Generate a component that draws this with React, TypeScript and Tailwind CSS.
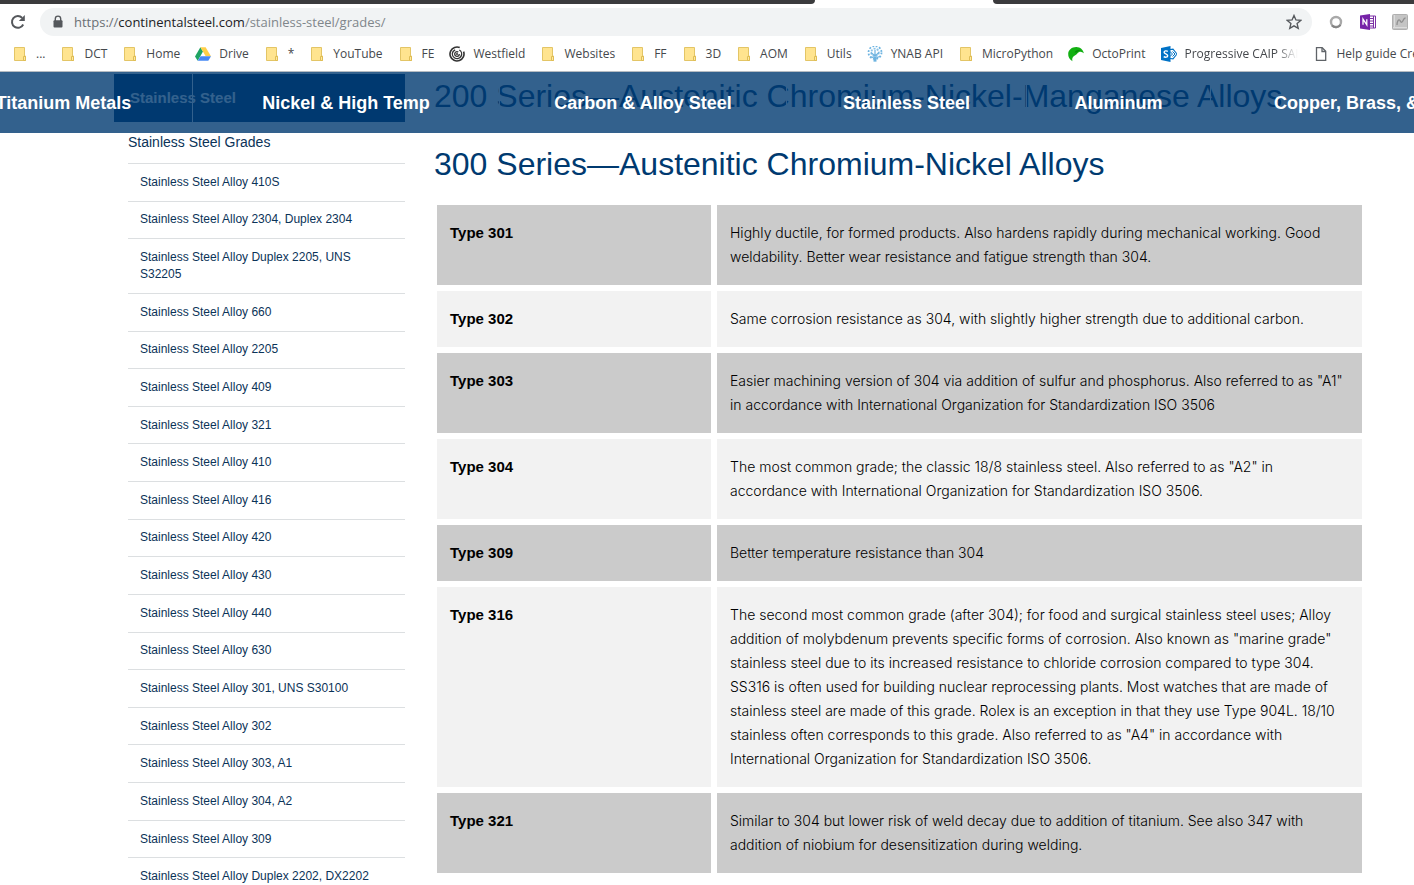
import React from 'react';

const grades = [
  'Stainless Steel Alloy 410S',
  'Stainless Steel Alloy 2304, Duplex 2304',
  'Stainless Steel Alloy Duplex 2205, UNS S32205',
  'Stainless Steel Alloy 660',
  'Stainless Steel Alloy 2205',
  'Stainless Steel Alloy 409',
  'Stainless Steel Alloy 321',
  'Stainless Steel Alloy 410',
  'Stainless Steel Alloy 416',
  'Stainless Steel Alloy 420',
  'Stainless Steel Alloy 430',
  'Stainless Steel Alloy 440',
  'Stainless Steel Alloy 630',
  'Stainless Steel Alloy 301, UNS S30100',
  'Stainless Steel Alloy 302',
  'Stainless Steel Alloy 303, A1',
  'Stainless Steel Alloy 304, A2',
  'Stainless Steel Alloy 309',
  'Stainless Steel Alloy Duplex 2202, DX2202',
];

const types = [
  {
    name: 'Type 301',
    text: 'Highly ductile, for formed products. Also hardens rapidly during mechanical working. Good weldability. Better wear resistance and fatigue strength than 304.',
  },
  {
    name: 'Type 302',
    text: 'Same corrosion resistance as 304, with slightly higher strength due to additional carbon.',
  },
  {
    name: 'Type 303',
    text: 'Easier machining version of 304 via addition of sulfur and phosphorus. Also referred to as "A1" in accordance with International Organization for Standardization ISO 3506',
  },
  {
    name: 'Type 304',
    text: 'The most common grade; the classic 18/8 stainless steel. Also referred to as "A2" in accordance with International Organization for Standardization ISO 3506.',
  },
  {
    name: 'Type 309',
    text: 'Better temperature resistance than 304',
  },
  {
    name: 'Type 316',
    text: 'The second most common grade (after 304); for food and surgical stainless steel uses; Alloy addition of molybdenum prevents specific forms of corrosion. Also known as "marine grade" stainless steel due to its increased resistance to chloride corrosion compared to type 304. SS316 is often used for building nuclear reprocessing plants. Most watches that are made of stainless steel are made of this grade. Rolex is an exception in that they use Type 904L. 18/10 stainless often corresponds to this grade. Also referred to as "A4" in accordance with International Organization for Standardization ISO 3506.',
  },
  {
    name: 'Type 321',
    text: 'Similar to 304 but lower risk of weld decay due to addition of titanium. See also 347 with addition of niobium for desensitization during welding.',
  },
];

const navItems = [
  { label: 'Titanium Metals', width: 'w-[258px] -ml-[65px]' },
  { label: 'Nickel & High Temp', width: 'w-[307px]' },
  { label: 'Carbon & Alloy Steel', width: 'w-[287px]' },
  { label: 'Stainless Steel', width: 'w-[240px]' },
  { label: 'Aluminum', width: 'w-[184px]' },
  { label: 'Copper, Brass, &', width: 'w-[272px]' },
];

const FolderIcon = () => (
  <svg width="16" height="16" viewBox="0 0 16 16" className="shrink-0">
    <path d="M2.5 1.5h10v8.5h1v4.5h-11z" fill="#ffe48f" stroke="#e3c566" />
    <path d="M11.5 10.5h2v4h-2z" fill="#ffe99f" stroke="#dfbd55" />
  </svg>
);

const DriveIcon = () => (
  <svg width="16" height="16" viewBox="0 0 16 16" className="shrink-0">
    <path d="M5.4 1.2 0 10.4l2.7 4.4L8 5.6z" fill="#1fa463" />
    <path d="M5.4 1.2h5.2L16 10.2h-5.3z" fill="#ffcf48" />
    <path d="M5.5 10.2H16l-2.7 4.6H2.7z" fill="#4688f4" />
  </svg>
);

const WestfieldIcon = () => (
  <svg width="16" height="16" viewBox="0 0 16 16" fill="none" stroke="#333" className="shrink-0">
    <circle cx="8" cy="8" r="7" strokeWidth="1.6" strokeDasharray="38 6" transform="rotate(-20 8 8)" />
    <circle cx="8" cy="8" r="4.6" strokeWidth="1.4" strokeDasharray="24 5" transform="rotate(-60 8 8)" />
    <circle cx="8" cy="8" r="2.3" strokeWidth="1.3" strokeDasharray="11 4" />
    <circle cx="8" cy="8" r="1" fill="#333" stroke="none" />
  </svg>
);

const YnabIcon = () => (
  <svg width="16" height="16" viewBox="0 0 16 16" fill="none" stroke="#6db3e0" className="shrink-0">
    <circle cx="8" cy="6.5" r="6.5" strokeWidth="1.8" strokeDasharray="1.8 1.6" />
    <circle cx="8" cy="6.5" r="3.8" strokeWidth="1.8" strokeDasharray="2 1.2" stroke="#8cc4e8" />
    <path d="M8 15.5V4M8 10 4 6.5M8 10l4-3.5M8 12.5l-4.5-2M8 12.5l4.5-2" strokeWidth="1.2" />
    <path d="M6.3 15.5h3.4L8.8 11H7.2z" fill="#6db3e0" stroke="none" />
  </svg>
);

const OctoIcon = () => (
  <svg width="16" height="16" viewBox="0 0 16 16" className="shrink-0">
    <path
      d="M4.5 15.2C1.5 13.5 0 11 .2 7.8.4 3.7 4 .9 8.400 1c3.8.1 6.7 2.500 7.500 6.300-1.500-1.300-3-1.800-4.700-1.300-1.300.4-1.700 1.700-3.200 2.700-2 1.300-4.600 2.600-3.500 6.500z"
      fill="#12b012"
    />
    <path d="M6.500 6.500c1.500-2.300 4-3 6.700-1.900-2.200-.1-3.400.6-4.500 2z" fill="#0a8a0a" />
  </svg>
);

const SharePointIcon = () => (
  <svg width="16" height="16" viewBox="0 0 16 16" className="shrink-0">
    <path d="M9 3.5 12 3.2l4 4.8-4 4.8-3-.3" fill="#fff" stroke="#0072c6" strokeWidth="1.1" />
    <path d="M9 5.5l2.5 2.5L9 10.5M11.5 5.5 14 8l-2.5 2.5" fill="none" stroke="#0072c6" />
    <path d="M0 2 9.5 0v16L0 14z" fill="#0072c6" />
    <path
      d="M6.8 5.3c-1.3-.8-3.7-.6-3.7.9C3.1 8 6.7 7.7 6.7 9.7c0 1.7-2.6 1.9-4 .9"
      fill="none"
      stroke="#fff"
      strokeWidth="1.4"
    />
  </svg>
);

const PageIcon = () => (
  <svg width="16" height="16" viewBox="0 0 16 16" fill="none" stroke="#5f6368" strokeWidth="1.3" className="shrink-0">
    <path d="M3.5 1.7h5.7l3.5 3.6v9H3.5z" />
    <path d="M9 1.9v3.6h3.6" />
  </svg>
);

const bookmarks = [
  { label: '...', icon: <FolderIcon /> },
  { label: 'DCT', icon: <FolderIcon /> },
  { label: 'Home', icon: <FolderIcon /> },
  { label: 'Drive', icon: <DriveIcon /> },
  { label: '*', icon: <FolderIcon /> },
  { label: 'YouTube', icon: <FolderIcon /> },
  { label: 'FE', icon: <FolderIcon /> },
  { label: 'Westfield', icon: <WestfieldIcon /> },
  { label: 'Websites', icon: <FolderIcon /> },
  { label: 'FF', icon: <FolderIcon /> },
  { label: '3D', icon: <FolderIcon /> },
  { label: 'AOM', icon: <FolderIcon /> },
  { label: 'Utils', icon: <FolderIcon /> },
  { label: 'YNAB API', icon: <YnabIcon /> },
  { label: 'MicroPython', icon: <FolderIcon /> },
  { label: 'OctoPrint', icon: <OctoIcon /> },
  { label: 'Progressive CAIP SAIP', icon: <SharePointIcon />, fade: true },
  { label: 'Help guide Cre', icon: <PageIcon /> },
];

const BrowserBar = () => {
  const [url, setUrl] = React.useState('https://continentalsteel.com/stainless-steel/grades/');
  const [editing, setEditing] = React.useState(false);

  return (
    <header className="shrink-0 border-b border-[#b6bcc2] bg-white font-['Open_Sans',sans-serif]">
      <div className="flex h-1">
        <div className="w-[815px] rounded-br bg-[#3b3b3d]" />
        <div className="w-[178px]" />
        <div className="flex-1 rounded-bl bg-[#3b3b3d]" />
      </div>
      <div className="mt-1 flex h-7 items-center pr-1.5 pl-2.5">
        <button aria-label="Reload" className="shrink-0">
          <svg width="16" height="16" viewBox="0 0 16 16" fill="none" stroke="#55585c" strokeWidth="2">
            <path d="M13.2 10.5A5.9 5.9 0 1 1 12.2 3.9" />
            <path d="M14.8 1v6H8.8z" fill="#55585c" stroke="none" />
          </svg>
        </button>
        <div className="ml-3.5 flex h-7 flex-1 items-center rounded-full bg-[#f1f3f4] pr-2.5 pl-3">
          <svg width="12" height="14" viewBox="0 0 12 14" className="shrink-0">
            <path d="M3.3 6V3.8a2.7 2.7 0 0 1 5.4 0V6" fill="none" stroke="#55585c" strokeWidth="1.4" />
            <rect x="1.5" y="5.3" width="9" height="7.2" rx="1" fill="#55585c" />
          </svg>
          {editing ? (
            <input
              aria-label="Address"
              autoFocus
              value={url}
              onChange={(e) => setUrl(e.target.value)}
              onBlur={() => setEditing(false)}
              className="ml-2.5 flex-1 bg-transparent text-[13px] outline-none"
            />
          ) : (
            <button
              onClick={() => setEditing(true)}
              className="ml-2.5 flex-1 cursor-text text-left text-[13px] leading-5 text-[#80868b]"
            >
              <span className="text-[#6b7075]">https://</span>
              <span className="text-[#202124]">continentalsteel.com</span>
              /stainless-steel/grades/
            </button>
          )}
          <button aria-label="Bookmark this page">
            <svg width="16" height="16" viewBox="0 0 14 14" fill="none" stroke="#55585c" strokeWidth="1.2">
              <path d="M7 1.3 8.7 5.2l4.2.4-3.2 2.8 1 4.2L7 10.4l-3.7 2.2 1-4.2L1.1 5.6l4.2-.4z" />
            </svg>
          </button>
        </div>
        <div className="ml-4 flex gap-4">
          <button aria-label="Extension">
            <svg width="16" height="16" viewBox="0 0 16 16">
              <circle cx="8" cy="8" r="5" fill="#fff" stroke="#a9a9a9" strokeWidth="2.4" />
              <path d="M4 11.5a5.3 5.3 0 0 0 8.500-.8" fill="none" stroke="#858585" strokeWidth="2" />
            </svg>
          </button>
          <button aria-label="OneNote clipper">
            <svg width="16" height="16" viewBox="0 0 16 16">
              <path d="M8 2h7.5v12H8z" fill="#fff" stroke="#7b2fa5" />
              <path d="M10 4.5h3M10 7h3M10 9.5h3M10 12h3M13.5 2v12" stroke="#7b2fa5" />
              <path d="M0 1.6 10 0v16L0 14.4z" fill="#7723a8" />
              <path d="M3 10.8V5.2l3.800 5.600V5.200" fill="none" stroke="#fff" strokeWidth="1.3" />
            </svg>
          </button>
          <button aria-label="Page monitor">
            <svg width="16" height="16" viewBox="0 0 16 16">
              <rect x=".5" y=".5" width="15" height="15" rx="1" fill="#c4c4c4" stroke="#b0b0b0" />
              <path d="M1 13.5h14M2.5 1v12" stroke="#dcdcdc" />
              <path d="M5 11c0-4 1.5-5.5 2.5-5S8.5 9 10 8s1-4 3.5-4" fill="none" stroke="#8f8f8f" strokeWidth="1.3" />
            </svg>
          </button>
        </div>
      </div>
      <nav aria-label="Bookmarks" className="flex h-[35px] items-center gap-[15px] overflow-hidden pl-3">
        {bookmarks.map((b) => (
          <a key={b.label} href="#" className="flex shrink-0 items-center gap-2 text-xs text-[#45484c]">
            {b.icon}
            <span
              className={
                b.fade
                  ? 'w-[113px] overflow-hidden whitespace-nowrap mask-r-from-80% mask-r-to-100%'
                  : 'whitespace-nowrap'
              }
            >
              {b.label}
            </span>
          </a>
        ))}
      </nav>
    </header>
  );
};

const MetalsNav = () => (
  <nav
    aria-label="Metals"
    className="absolute inset-x-0 top-0 flex h-[61px] overflow-hidden bg-[#003a70]/80 text-lg font-bold text-white"
  >
    {navItems.map((item) => (
      <a
        key={item.label}
        href="#"
        className={`flex shrink-0 items-center justify-center border-r border-[#33618d] whitespace-nowrap ${item.width}`}
      >
        {item.label}
      </a>
    ))}
  </nav>
);

const Sidebar = () => (
  <aside className="w-[291px] shrink-0 pt-0.5 text-[#003a70]">
    <h2 className="flex h-12 items-center bg-[#003a70] px-4 text-[15px] font-bold text-white">Stainless Steel</h2>
    <div className="ml-3.5">
      <a href="#" className="flex h-[42px] items-center border-b border-[#dcdfe1] pb-0.5 text-sm text-[#0b3358]">
        Stainless Steel Grades
      </a>
      <ul className="grid min-h-[732px]">
        {grades.map((grade) => (
          <li key={grade} className="flex items-center border-b border-[#dcdfe1] px-3 py-[9px]">
            <a href="#" className="text-xs leading-[17px] text-[#0b3358]">
              {grade}
            </a>
          </li>
        ))}
      </ul>
    </div>
  </aside>
);

const GradeTable = () => (
  <table className="mt-[18px] w-full table-fixed border-separate border-spacing-0 text-left">
    <tbody>
      {types.map((type) => (
        <tr key={type.name} className="bg-[#f2f2f2] odd:bg-[#cbcbcb]">
          <th
            scope="row"
            className="w-[280px] border-3 border-white px-[13px] py-4 align-top text-[15px] leading-6 font-bold text-black"
          >
            {type.name}
          </th>
          <td className="border-3 border-white px-[13px] py-4 align-top font-['Inter',sans-serif] text-sm leading-6 font-light text-black">
            {type.text}
          </td>
        </tr>
      ))}
    </tbody>
  </table>
);

export default function App() {
  return (
    <div className="flex h-screen flex-col overflow-hidden bg-white font-['Liberation_Sans',Arial,sans-serif]">
      <BrowserBar />
      <div className="relative flex-1 overflow-hidden">
        <div className="flex gap-[29px] pr-[49px] pl-[114px]">
          <Sidebar />
          <main className="min-w-0 flex-1 pt-1">
            <h2 className="text-[32px] leading-10 whitespace-nowrap text-[#003a70]">
              200 Series—Austenitic Chromium-Nickel-Manganese Alloys
            </h2>
            <h2 className="mt-7 text-[32px] leading-10 text-[#003a70]">300 Series—Austenitic Chromium-Nickel Alloys</h2>
            <GradeTable />
          </main>
        </div>
        <MetalsNav />
      </div>
    </div>
  );
}
